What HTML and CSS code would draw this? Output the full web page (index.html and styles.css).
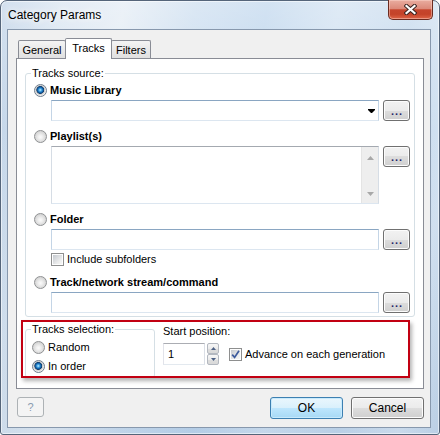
FILE: index.html
```html
<!DOCTYPE html>
<html>
<head>
<meta charset="utf-8">
<title>Category Params</title>
<link rel="stylesheet" href="styles.css">
</head>
<body>
<div class="window">
  <div class="titlebar"><span class="title">Category Params</span></div>
  <div class="close">
    <svg width="13" height="11" viewBox="0 0 13 11"><path d="M2.5 2 L10.5 9 M10.5 2 L2.5 9" stroke="#3b2420" stroke-width="4.2" stroke-linecap="square" fill="none"/><path d="M2.5 2 L10.5 9 M10.5 2 L2.5 9" stroke="#ffffff" stroke-width="2.2" stroke-linecap="square" fill="none"/></svg>
  </div>
  <div class="client">
    <div class="tabs">
      <div class="tab general">General</div>
      <div class="tab tracks active">Tracks</div>
      <div class="tab filters">Filters</div>
    </div>
    <div class="panel">
      <div class="group source">
        <div class="legend">Tracks source:</div>
        <div class="opt"><span class="radio on"></span><span class="lbl bold">Music Library</span></div>
        <div class="frow">
          <div class="edit combo"><svg class="arrow" width="7" height="4" viewBox="0 0 7 4"><polygon points="0,0 7,0 7,1 4,4 3,4 0,1" fill="#000"/></svg></div>
          <div class="btn dots">...</div>
        </div>
        <div class="opt gap"><span class="radio"></span><span class="lbl bold">Playlist(s)</span></div>
        <div class="frow">
          <div class="edit listbox">
            <div class="vscroll">
              <svg width="7" height="4" viewBox="0 0 7 4"><polygon points="3.5,0 7,4 0,4" fill="#a8a8a8"/></svg>
              <svg width="7" height="4" viewBox="0 0 7 4"><polygon points="0,0 7,0 3.5,4" fill="#a8a8a8"/></svg>
            </div>
          </div>
          <div class="btn dots">...</div>
        </div>
        <div class="opt gap"><span class="radio"></span><span class="lbl bold">Folder</span></div>
        <div class="frow">
          <div class="edit"></div>
          <div class="btn dots">...</div>
        </div>
        <div class="chkrow"><span class="check"></span><span class="lbl">Include subfolders</span></div>
        <div class="opt gap2"><span class="radio"></span><span class="lbl bold">Track/network stream/command</span></div>
        <div class="frow">
          <div class="edit"></div>
          <div class="btn dots">...</div>
        </div>
      </div>
      <div class="lower">
        <div class="group sel">
          <div class="legend">Tracks selection:</div>
          <div class="opt small first"><span class="radio"></span><span class="lbl">Random</span></div>
          <div class="opt small second"><span class="radio on"></span><span class="lbl">In order</span></div>
        </div>
        <div class="startpos">
          <div class="splabel">Start position:</div>
          <div class="sprow">
            <div class="spedit">1</div>
            <div class="spin">
              <div class="spbtn"><svg width="5" height="3" viewBox="0 0 5 3"><polygon points="2.5,0 5,3 0,3" fill="#4d6185"/></svg></div>
              <div class="spbtn"><svg width="5" height="3" viewBox="0 0 5 3"><polygon points="0,0 5,0 2.5,3" fill="#4d6185"/></svg></div>
            </div>
            <span class="check checked"><svg width="9" height="9" viewBox="0 0 9 9"><path d="M1.2 4.6 L3.6 7.4 L8 0.8" stroke="#3c5a9c" stroke-width="1.7" fill="none"/></svg></span>
            <span class="lbl">Advance on each generation</span>
          </div>
        </div>
      </div>
      <div class="highlight"></div>
    </div>
    <div class="buttons">
      <div class="btn help">?</div>
      <div class="btn ok">OK</div>
      <div class="btn cancel">Cancel</div>
    </div>
  </div>
</div>
</body>
</html>
```
FILE: styles.css
```css
html, body {
  margin: 0;
  padding: 0;
  background: #ffffff;
}
body {
  width: 440px;
  height: 435px;
  overflow: hidden;
  font-family: "Liberation Sans", Arial, sans-serif;
  font-size: 11px;
  color: #000;
}
.window {
  position: relative;
  box-sizing: border-box;
  width: 440px;
  height: 435px;
  border: 1px solid #55657a;
  border-radius: 7px 7px 3px 3px;
  padding: 0 8px 6px 6px;
  display: flex;
  flex-direction: column;
  background:
    linear-gradient(180deg, rgba(255,255,255,0.35) 0%, rgba(255,255,255,0) 30%, rgba(120,150,185,0.12) 100%),
    linear-gradient(100deg, #bcd0e6 0%, #d6e3f0 12%, #e2ebf4 24%, #c9dcef 38%, #bcd4ec 52%, #cfe0f1 66%, #c2d7ec 80%, #d4e3f2 92%, #c4d7eb 100%);
  box-shadow: inset 0 0 0 1px rgba(255,255,255,0.55);
}
.titlebar {
  height: 28px;
  display: flex;
  align-items: center;
  padding-left: 1px;
}
.title {
  font-size: 12px;
  color: #000;
  text-shadow: 0 0 6px #ffffff, 0 0 10px rgba(255,255,255,0.9);
}
.close {
  position: absolute;
  top: -1px;
  right: 6px;
  width: 45px;
  height: 20px;
  box-sizing: border-box;
  border: 1px solid #6b2b20;
  border-top: none;
  border-radius: 0 0 5px 5px;
  background: linear-gradient(180deg, #e9ada0 0%, #dc8a7a 45%, #c6452d 52%, #c44329 75%, #de6547 100%);
  box-shadow: inset 0 0 0 1px rgba(255,220,210,0.45);
  display: flex;
  align-items: center;
  justify-content: center;
}
.client {
  box-sizing: border-box;
  width: 424px;
  height: 399px;
  border: 1px solid #8798ad;
  background: #f0f0f0;
  padding: 8px 0 0 8px;
}
.tabs {
  display: flex;
  align-items: flex-end;
  height: 20px;
  padding-left: 2px;
  position: relative;
  z-index: 1;
}
.tab {
  box-sizing: border-box;
  height: 18px;
  border: 1px solid #898c95;
  border-bottom: none;
  border-radius: 2px 2px 0 0;
  background: linear-gradient(180deg, #f4f4f4 0%, #e9e9e9 50%, #e0e0e0 100%);
  padding-top: 2px;
  line-height: 14px;
  text-align: center;
}
.tab.general { width: 48px; }
.tab.tracks { width: 47px; margin-left: -1px; }
.tab.filters { width: 40px; margin-left: -1px; }
.tab.active {
  height: 21px;
  margin-bottom: -1px;
  background: #ffffff;
  position: relative;
  z-index: 2;
}
.panel {
  position: relative;
  box-sizing: border-box;
  width: 408px;
  height: 331px;
  border: 1px solid #898c95;
  background: #ffffff;
  padding: 14px 0 0 8px;
}
.group {
  box-sizing: border-box;
  border: 1px solid #d5dfe5;
  border-radius: 3px;
}
.group.source {
  width: 390px;
  padding-bottom: 3px;
}
.legend {
  width: max-content;
  margin: -7px 0 0 5px;
  padding: 0 1px;
  background: #ffffff;
  line-height: 13px;
}
.opt {
  display: flex;
  align-items: center;
  height: 13px;
  margin-top: 4px;
  padding-left: 8px;
}
.opt.gap { margin-top: 9px; }
.opt.gap2 { margin-top: 10px; }
.opt.small { padding-left: 6px; }
.opt.small.first { margin-top: 5px; }
.opt.small.second { margin-top: 6px; }
.lbl {
  margin-left: 3px;
  white-space: nowrap;
  line-height: 13px;
}
.bold { font-weight: bold; }
.radio {
  box-sizing: border-box;
  width: 13px;
  height: 13px;
  flex: none;
  border-radius: 50%;
  border: 1px solid #8f9193;
  background: radial-gradient(circle at 50% 55%, #fbfbfb 0, #f0f0f0 2px, #d6d6d6 5.5px);
}
.radio.on {
  border-color: #6f7d8c;
  background: radial-gradient(circle at 48% 45%, #c6f0ff 0, #45a6e6 1.4px, #1365ae 2.6px, #123e6d 3.6px, #c8c8c8 4.2px, #eeeeee 5.5px);
}
.check {
  box-sizing: border-box;
  width: 13px;
  height: 13px;
  flex: none;
  border: 1px solid #8e8f8f;
  padding: 1px;
  background: linear-gradient(135deg, #c4c8ce 0%, #eceded 70%, #f6f6f6 100%) content-box, #fdfdfd;
  display: flex;
  align-items: center;
  justify-content: center;
}
.check svg { display: block; }
.chkrow {
  display: flex;
  align-items: center;
  height: 13px;
  margin-top: 3px;
  padding-left: 25px;
}
.frow {
  display: flex;
  margin-top: 3px;
  padding-left: 25px;
}
.edit {
  box-sizing: border-box;
  width: 328px;
  height: 21px;
  border: 1px solid;
  border-color: #8aa6c2 #c4d5e6 #dce6f0 #c4d5e6;
  background: #ffffff;
}
.combo {
  display: flex;
  align-items: center;
  justify-content: flex-end;
  padding-right: 3px;
}
.arrow { display: block; }
.listbox {
  height: 58px;
  border-color: #a4a9b0 #d6dde5 #dce6f0 #d6dde5;
  display: flex;
  justify-content: flex-end;
}
.vscroll {
  box-sizing: border-box;
  width: 17px;
  height: 100%;
  background: #eeeeee;
  border-left: 1px solid #e4e4e4;
  display: flex;
  flex-direction: column;
  align-items: center;
  justify-content: space-between;
  padding: 9px 0 7px;
}
.vscroll svg { display: block; }
.btn {
  box-sizing: border-box;
  border: 1px solid #707070;
  border-radius: 3px;
  background: linear-gradient(180deg, #f2f2f2 0%, #ebebeb 50%, #dddddd 50%, #cfcfcf 100%);
  box-shadow: inset 0 0 0 1px #fcfcfc;
  display: flex;
  align-items: center;
  justify-content: center;
  flex: none;
}
.dots {
  width: 27px;
  height: 21px;
  margin-left: 4px;
  color: #24246a;
  font-weight: bold;
  letter-spacing: 1px;
  padding-left: 1px;
  line-height: 13px;
  padding-top: 1px;
}
.lower {
  display: flex;
  align-items: flex-start;
  margin-top: 6px;
}
.group.sel {
  width: 130px;
  margin-top: 6px;
  padding-bottom: 4px;
}
.startpos {
  margin-left: 8px;
  margin-top: 2px;
}
.splabel { line-height: 13px; }
.sprow {
  display: flex;
  align-items: center;
  margin-top: 5px;
}
.spedit {
  box-sizing: border-box;
  width: 42px;
  height: 22px;
  border: 1px solid;
  border-color: #abadb3 #dbdfe6 #e3e9ef #e2e3ea;
  background: #fff;
  padding-left: 4px;
  line-height: 20px;
}
.spin {
  display: flex;
  flex-direction: column;
  margin-left: 2px;
  height: 22px;
}
.spbtn {
  box-sizing: border-box;
  width: 12px;
  height: 11px;
  border: 1px solid #b3b8c0;
  border-radius: 2px;
  background: linear-gradient(180deg, #f7f7f7 0%, #ececec 50%, #dedede 51%, #d9d9d9 100%);
  display: flex;
  align-items: center;
  justify-content: center;
}
.spbtn svg { display: block; }
.sprow .check { margin-left: 10px; }
.sprow .lbl { margin-left: 3px; }
.highlight {
  position: absolute;
  left: 4px;
  top: 261px;
  width: 389px;
  height: 58px;
  box-sizing: border-box;
  border: 2px solid #c20012;
  box-shadow: 2px 3px 4px rgba(0,0,0,0.3);
  pointer-events: none;
}
.buttons {
  display: flex;
  align-items: flex-start;
  width: 408px;
  margin-top: 8px;
}
.help {
  width: 27px;
  height: 20px;
  margin-left: 1px;
  border-color: #adb2b5;
  background: #f4f4f4;
  box-shadow: none;
  color: #8a9bb0;
  font-size: 11px;
}
.ok, .cancel {
  width: 73px;
  height: 22px;
  font-size: 12px;
}
.ok {
  margin-left: auto;
  border-color: #3c7fb1;
  background: linear-gradient(180deg, #eaf6fd 0%, #d9f0fc 50%, #bee6fd 50%, #a7d9f5 100%);
  box-shadow: inset 0 0 0 1px #c8eafc;
}
.cancel {
  margin-left: 8px;
}
```
